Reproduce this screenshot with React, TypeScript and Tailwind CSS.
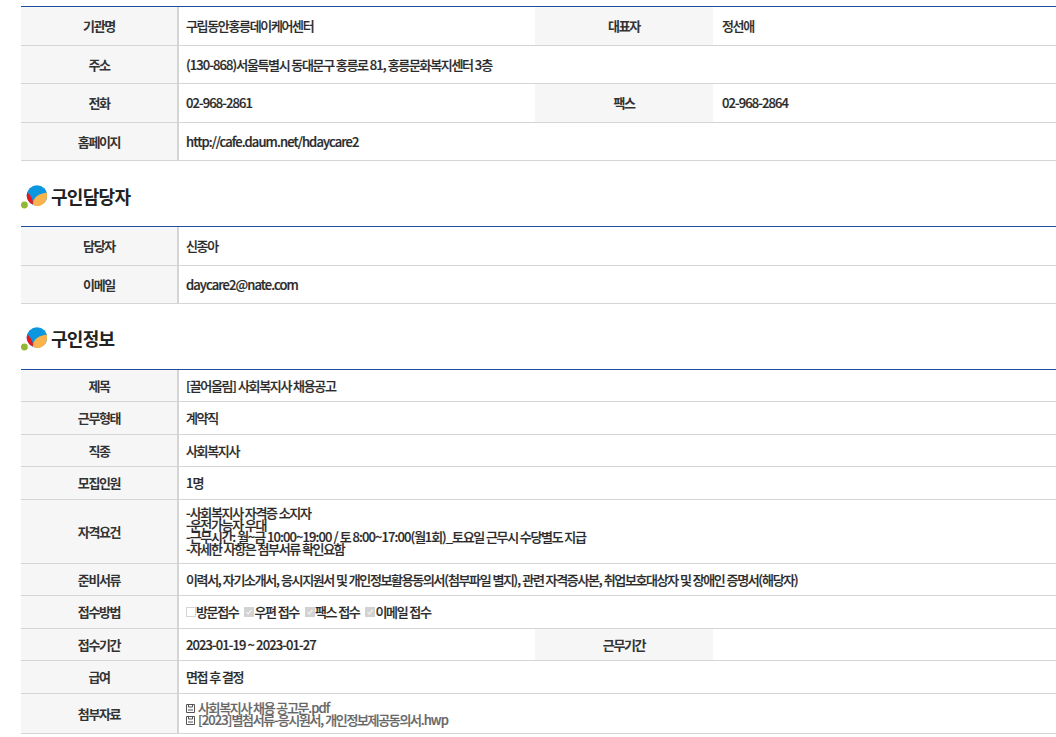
import React from "react";

const font = "font-['Noto_Sans_CJK_KR',sans-serif]";

function T({ children }: { children: string }) {
  const parts = children.split(/([\uAC00-\uD7A3]+)/).filter(Boolean);
  return (
    <span className="whitespace-pre">
      {parts.map((p, i) => (
        <span key={i} className={/[\uAC00-\uD7A3]/.test(p) ? "tracking-[-1.35px]" : "tracking-[-0.9px]"}>
          {p}
        </span>
      ))}
    </span>
  );
}

function Label({ children, wide }: { children: string; wide?: boolean }) {
  return (
    <div className={`${wide ? "w-[178px]" : "w-[158px] border-r-2 border-[#d5d5d5]"} shrink-0 bg-[#f6f6f6] flex items-center justify-center text-[13px] font-bold text-[#333]`}>
      <T>{children}</T>
    </div>
  );
}

function Value({ children, w, second }: { children?: React.ReactNode; w?: string; second?: boolean }) {
  return (
    <div className={`${w ?? "flex-1"} ${second ? "pl-[9px]" : "pl-[7px]"} flex items-center text-[13px] font-medium text-[#2a2a2a] [-webkit-text-stroke:0.2px] min-w-0 whitespace-nowrap`}>
      {children}
    </div>
  );
}

function Row({ h, children }: { h: string; children: React.ReactNode }) {
  return <div className={`flex ${h} border-b border-[#d5d5d5]`}>{children}</div>;
}

function Heading({ children, h }: { children: string; h: string }) {
  return (
    <div className={`flex items-center ${h} pt-[5px]`}>
      <svg width="26" height="25" viewBox="0 0 26 25" className="shrink-0">
        <circle cx="16" cy="11.5" r="10.3" fill="#0a97e0" />
        <path d="M6.3 8.5 C9 10 11.5 14.5 12.5 20.6 C8.5 19.5 5.7 15.5 5.7 11.5 Z" fill="#e8161f" />
        <path d="M12 21 C11.5 15 15 10.5 25.7 8.5 C27.5 15 23 22 16 22 Z" fill="#fbb34c" />
        <circle cx="3.4" cy="21" r="3.4" fill="#93b934" />
      </svg>
      <h2 className="ml-[4px] text-[18px] font-bold text-[#222] tracking-[-0.7px]">{children}</h2>
    </div>
  );
}

function Check({ on }: { on?: boolean }) {
  return (
    <span className={`inline-flex items-center justify-center w-[10px] h-[10px] shrink-0 ${on ? "bg-[#d2d2d2]" : "bg-white border border-[#d5d5d5]"}`}>
      {on && (
        <svg width="8" height="8" viewBox="0 0 8 8">
          <path d="M1.5 4.2 L3.2 6 L6.5 2" stroke="#f2f2f2" strokeWidth="1.2" fill="none" />
        </svg>
      )}
    </span>
  );
}

function FileIcon() {
  return (
    <svg width="9" height="9" viewBox="0 0 9 9" className="shrink-0 mr-[3px]">
      <path d="M0.5 0.5 H8.5 V8.5 H0.5 Z M2.5 0.5 V3 H6.5 V0.5 M2 6 H7" stroke="#555" strokeWidth="1" fill="none" />
    </svg>
  );
}

export default function App() {
  return (
    <div className={`${font} w-[1056px] h-[737px] overflow-hidden bg-white pl-[21px] pt-[6px]`}>
      <div className="border-t border-[#1d4f9c]">
        <Row h="h-[38.5px]">
          <Label>기관명</Label>
          <Value w="w-[356px]"><T>구립동안홍릉데이케어센터</T></Value>
          <Label wide>대표자</Label>
          <Value second><T>정선애</T></Value>
        </Row>
        <Row h="h-[38.5px]">
          <Label>주소</Label>
          <Value><T>(130-868)서울특별시 동대문구 홍릉로 81, 홍릉문화복지센터 3층</T></Value>
        </Row>
        <Row h="h-[38.5px]">
          <Label>전화</Label>
          <Value w="w-[356px]"><T>02-968-2861</T></Value>
          <Label wide>팩스</Label>
          <Value second><T>02-968-2864</T></Value>
        </Row>
        <Row h="h-[38.5px]">
          <Label>홈페이지</Label>
          <Value><T>http://cafe.daum.net/hdaycare2</T></Value>
        </Row>
      </div>

      <Heading h="h-[65px]">구인담당자</Heading>

      <div className="border-t border-[#1d4f9c]">
        <Row h="h-[38.5px]">
          <Label>담당자</Label>
          <Value><T>신종아</T></Value>
        </Row>
        <Row h="h-[38.5px]">
          <Label>이메일</Label>
          <Value><T>daycare2@nate.com</T></Value>
        </Row>
      </div>

      <Heading h="h-[64.75px]">구인정보</Heading>

      <div className="border-t border-[#1d4f9c]">
        <Row h="h-[32.5px]">
          <Label>제목</Label>
          <Value><T>[끌어올림] 사회복지사 채용공고</T></Value>
        </Row>
        <Row h="h-[32.5px]">
          <Label>근무형태</Label>
          <Value><T>계약직</T></Value>
        </Row>
        <Row h="h-[32.5px]">
          <Label>직종</Label>
          <Value><T>사회복지사</T></Value>
        </Row>
        <Row h="h-[32.5px]">
          <Label>모집인원</Label>
          <Value><T>1명</T></Value>
        </Row>
        <Row h="h-[64px]">
          <Label>자격요건</Label>
          <Value>
            <div className="leading-[12px]">
              <p><T>-사회복지사 자격증 소지자</T></p>
              <p><T>-운전가능자 우대</T></p>
              <p><T>-근무시간: 월~금 10:00~19:00 / 토 8:00~17:00(월1회)_토요일 근무시 수당별도 지급</T></p>
              <p><T>-자세한 사항은 첨부서류 확인요함</T></p>
            </div>
          </Value>
        </Row>
        <Row h="h-[32.5px]">
          <Label>준비서류</Label>
          <Value><T>이력서, 자기소개서, 응시지원서 및 개인정보활용동의서(첨부파일 별지), 관련 자격증사본, 취업보호대상자 및 장애인 증명서(해당자)</T></Value>
        </Row>
        <Row h="h-[32.5px]">
          <Label>접수방법</Label>
          <Value>
            <Check /><T>방문접수</T>
            <span className="w-[6px]" />
            <Check on /><T>우편 접수</T>
            <span className="w-[6px]" />
            <Check on /><T>팩스 접수</T>
            <span className="w-[6px]" />
            <Check on /><T>이메일 접수</T>
          </Value>
        </Row>
        <Row h="h-[32.5px]">
          <Label>접수기간</Label>
          <Value w="w-[356px]"><T>2023-01-19 ~ 2023-01-27</T></Value>
          <Label wide>근무기간</Label>
          <Value />
        </Row>
        <Row h="h-[32.5px]">
          <Label>급여</Label>
          <Value><T>면접 후 결정</T></Value>
        </Row>
        <Row h="h-[40px]">
          <Label>첨부자료</Label>
          <Value>
            <div className="leading-[12px] text-[#666] pt-[2px]">
              <p className="flex items-center"><FileIcon /><T>사회복지사 채용 공고문.pdf</T></p>
              <p className="flex items-center"><FileIcon /><T>[2023]별첨서류-응시원서, 개인정보제공동의서.hwp</T></p>
            </div>
          </Value>
        </Row>
      </div>
    </div>
  );
}
